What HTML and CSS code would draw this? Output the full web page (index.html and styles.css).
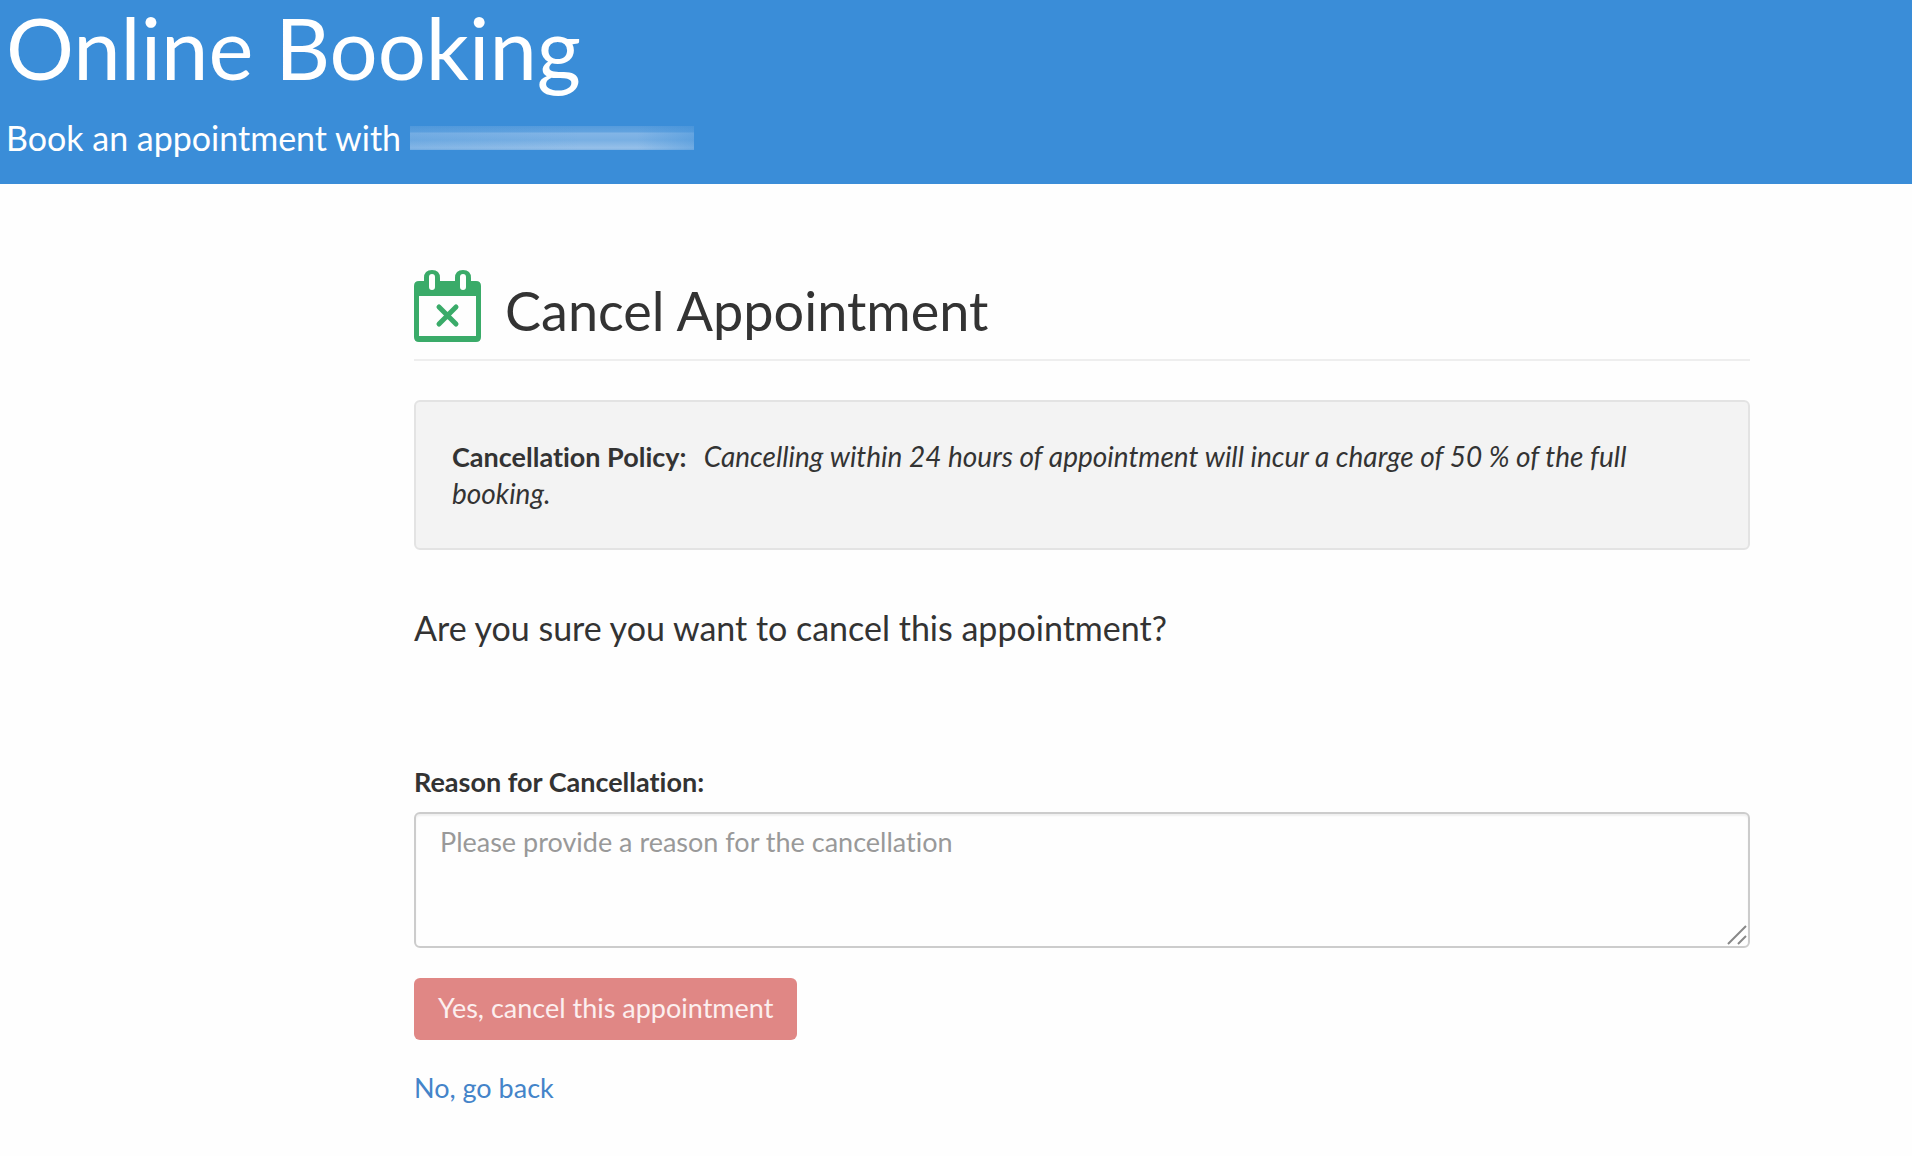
FILE: index.html
```html
<!DOCTYPE html>
<html lang="en">
<head>
    <meta charset="UTF-8">
    <meta name="viewport" content="width=device-width, initial-scale=1.0">
    <title>Online Booking</title>
    <link rel="stylesheet" href="styles.css">
</head>
<body>
    <header class="banner">
        <h1>Online Booking</h1>
        <p>Book an appointment with<span class="redacted"></span></p>
    </header>

    <main class="container">
        <div class="page-header">
            <svg class="calendar-icon" viewBox="0 0 67 72" aria-hidden="true">
                <path fill="#3aab69" fill-rule="evenodd" d="M5 11H10V8Q10 0 18 0Q26 0 26 8V11H41V8Q41 0 49 0Q57 0 57 8V11H62Q67 11 67 16V67Q67 72 62 72H5Q0 72 0 67V16Q0 11 5 11ZM5 26V66H62V26Z"/>
                <path stroke="#fff" stroke-width="6" stroke-linecap="round" d="M18 7V17M49 7V17"/>
                <path stroke="#3aab69" stroke-width="5" stroke-linecap="round" d="M25 37L42 54M42 37L25 54"/>
            </svg>
            <h2>Cancel Appointment</h2>
        </div>

        <div class="well">
            <strong>Cancellation Policy:</strong>
            <em>Cancelling within 24 hours of appointment will incur a charge of 50 % of the full booking.</em>
        </div>

        <p class="lead">Are you sure you want to cancel this appointment?</p>

        <form class="cancel-form">
            <label for="reason">Reason for Cancellation:</label>
            <div class="textarea-wrap">
                <textarea id="reason" placeholder="Please provide a reason for the cancellation"></textarea>
                <svg class="grip" viewBox="0 0 20 20" aria-hidden="true">
                    <path stroke="#888" stroke-width="2" d="M1 19L19 1M11 19L19 11"/>
                </svg>
            </div>
            <button type="button" class="btn-danger">Yes, cancel this appointment</button>
            <a href="#" class="back-link">No, go back</a>
        </form>
    </main>
</body>
</html>
```
FILE: styles.css
```css
* {
    box-sizing: border-box;
}

body {
    margin: 0;
    background: #fefefe;
    color: #333;
    font-family: Lato, "Liberation Sans", sans-serif;
    font-size: 28px;
    line-height: 36px;
    font-variant-ligatures: none;
}

h1, h2, p {
    margin: 0;
    font-weight: 400;
}

/* Top banner */
.banner {
    height: 184px;
    padding: 0 6px;
    background: #3a8dd8;
    color: #fff;
}

.banner h1 {
    font-size: 85px;
    line-height: 94px;
}

.banner p {
    display: flex;
    align-items: center;
    margin-top: 26px;
    font-size: 34px;
}

.redacted {
    width: 284px;
    height: 24px;
    margin-left: 9px;
    background:
        linear-gradient(90deg, rgba(58, 141, 216, 0.2), rgba(58, 141, 216, 0) 60%, rgba(58, 141, 216, 0) 80%, rgba(58, 141, 216, 0.4)),
        linear-gradient(#559bdc, #62a3df 6px, #83b5e6 7px, #78afe3 14px, #96c0e9 22px, #7fb3e4);
}

/* Main column */
.container {
    padding: 86px 162px 40px 414px;
}

.page-header {
    display: flex;
    gap: 24px;
    height: 91px;
    border-bottom: 2px solid #eee;
}

.page-header h2 {
    margin-top: 8px;
    font-size: 54px;
    line-height: 65px;
}

.calendar-icon {
    width: 67px;
    height: 72px;
}

.well {
    margin-top: 39px;
    padding: 36px;
    border: 2px solid #e3e3e3;
    border-radius: 6px;
    background: #f3f3f3;
    line-height: 37px;
}

.well strong {
    margin-right: 10px;
    font-size: 27px;
}

.lead {
    margin-top: 60px;
    font-size: 34px;
}

/* Cancellation form */
.cancel-form {
    margin-top: 118px;
    font-size: 27px;
}

.cancel-form label {
    display: block;
    margin-bottom: 12px;
    font-weight: 700;
}

.textarea-wrap {
    position: relative;
}

textarea {
    display: block;
    width: 100%;
    height: 136px;
    padding: 10px 24px;
    border: 2px solid #ccc;
    border-radius: 6px;
    background: #fefefe;
    box-shadow: inset 0 2px 2px rgba(0, 0, 0, 0.06);
    color: #555;
    font: inherit;
    resize: vertical;
}

textarea::placeholder {
    color: #999;
}

textarea::-webkit-resizer {
    display: none;
}

.grip {
    position: absolute;
    right: 3px;
    bottom: 3px;
    width: 20px;
    height: 20px;
    pointer-events: none;
}

.btn-danger {
    display: block;
    height: 62px;
    margin: 30px 0;
    padding: 0 24px 2px;
    border: 0;
    border-radius: 6px;
    background: #e08785;
    color: #fcefef;
    font: inherit;
}

.back-link {
    color: #4484c9;
    text-decoration: none;
}
```
